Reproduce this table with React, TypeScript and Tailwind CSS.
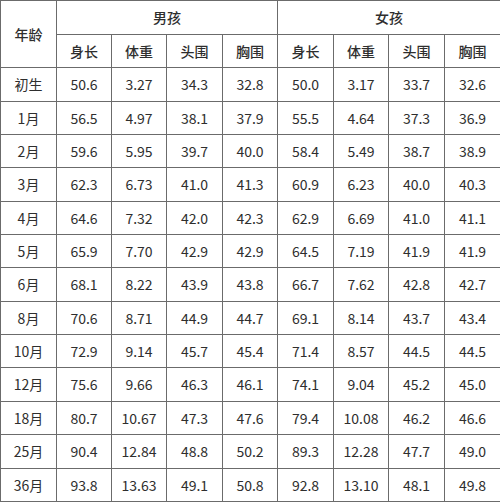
import type { FC } from "react";

type Row = [string, string[], string[]];

const rows: Row[] = [
  ["初生", ["50.6", "3.27", "34.3", "32.8"], ["50.0", "3.17", "33.7", "32.6"]],
  ["1月", ["56.5", "4.97", "38.1", "37.9"], ["55.5", "4.64", "37.3", "36.9"]],
  ["2月", ["59.6", "5.95", "39.7", "40.0"], ["58.4", "5.49", "38.7", "38.9"]],
  ["3月", ["62.3", "6.73", "41.0", "41.3"], ["60.9", "6.23", "40.0", "40.3"]],
  ["4月", ["64.6", "7.32", "42.0", "42.3"], ["62.9", "6.69", "41.0", "41.1"]],
  ["5月", ["65.9", "7.70", "42.9", "42.9"], ["64.5", "7.19", "41.9", "41.9"]],
  ["6月", ["68.1", "8.22", "43.9", "43.8"], ["66.7", "7.62", "42.8", "42.7"]],
  ["8月", ["70.6", "8.71", "44.9", "44.7"], ["69.1", "8.14", "43.7", "43.4"]],
  ["10月", ["72.9", "9.14", "45.7", "45.4"], ["71.4", "8.57", "44.5", "44.5"]],
  ["12月", ["75.6", "9.66", "46.3", "46.1"], ["74.1", "9.04", "45.2", "45.0"]],
  ["18月", ["80.7", "10.67", "47.3", "47.6"], ["79.4", "10.08", "46.2", "46.6"]],
  ["25月", ["90.4", "12.84", "48.8", "50.2"], ["89.3", "12.28", "47.7", "49.0"]],
  ["36月", ["93.8", "13.63", "49.1", "50.8"], ["92.8", "13.10", "48.1", "49.8"]],
];

// row heights so the grid lands on the same lines as the picture
const rowH = [
  "h-[34px]", "h-[33px]", "h-[33px]", "h-[34px]", "h-[33px]", "h-[33px]", "h-[34px]",
  "h-[33px]", "h-[33px]", "h-[34px]", "h-[33px]", "h-[34px]", "h-[33px]",
];

const subHeads = ["身长", "体重", "头围", "胸围"];

const cell = "border border-[#6b6b6b] text-center align-middle p-0";

const App: FC = () => {
  return (
    <div className="w-[500px] h-[502px] bg-white">
      <table
        className="w-[500px] table-fixed border-collapse text-[14px] text-[#2e2e2e]"
        style={{ fontFamily: '"Noto Sans CJK SC", "Noto Sans", sans-serif' }}
      >
        <colgroup>
          <col className="w-[56px]" />
          <col className="w-[55px]" />
          <col className="w-[55px]" />
          <col className="w-[56px]" />
          <col className="w-[55px]" />
          <col className="w-[56px]" />
          <col className="w-[55px]" />
          <col className="w-[56px]" />
          <col className="w-[56px]" />
        </colgroup>
        <thead>
          <tr className="h-[34px]">
            <th rowSpan={2} className={`${cell} font-medium`}>
              年龄
            </th>
            <th colSpan={4} className={`${cell} font-medium`}>
              男孩
            </th>
            <th colSpan={4} className={`${cell} font-medium`}>
              女孩
            </th>
          </tr>
          <tr className="h-[33px]">
            {[...subHeads, ...subHeads].map((h, i) => (
              <th key={i} className={`${cell} font-medium`}>
                {h}
              </th>
            ))}
          </tr>
        </thead>
        <tbody>
          {rows.map(([age, boy, girl], r) => (
            <tr key={age} className={rowH[r]}>
              <td className={`${cell} font-normal`}>{age}</td>
              {[...boy, ...girl].map((v, i) => (
                <td key={i} className={`${cell} font-normal`}>
                  {v}
                </td>
              ))}
            </tr>
          ))}
        </tbody>
      </table>
    </div>
  );
};

export default App;
